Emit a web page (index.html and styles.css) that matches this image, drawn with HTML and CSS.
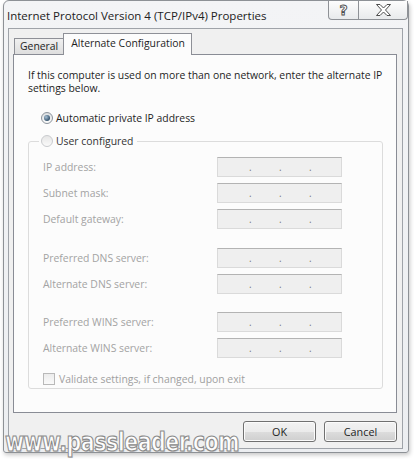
FILE: index.html
```html
<!DOCTYPE html>
<html>
<head>
<meta charset="utf-8">
<link rel="stylesheet" href="styles.css">
</head>
<body>
<div class="window">
  <div class="titlebar">
    <span class="title">Internet Protocol Version 4 (TCP/IPv4) Properties</span>
    <div class="caption">
      <div class="cbtn help"><span class="qmark">?</span></div>
      <div class="cbtn close">
        <svg width="17" height="12" viewBox="0 0 17 12"><polygon points="1.5,0.5 5,0.5 8.5,4 12,0.5 15.5,0.5 10.5,6 15.5,11.5 12,11.5 8.5,8 5,11.5 1.5,11.5 6.5,6" fill="#fff" stroke="#4d4d4d" stroke-width="1"/></svg>
      </div>
    </div>
  </div>
  <div class="client">
    <div class="tabs">
      <div class="tab">General</div>
      <div class="tab active">Alternate Configuration</div>
    </div>
    <div class="panel">
      <p class="intro">If this computer is used on more than one network, enter the alternate IP<br>settings below.</p>
      <div class="radio-row"><span class="rb checked"></span><span>Automatic private IP address</span></div>
      <fieldset class="group">
        <legend><span class="rb"></span><span>User configured</span></legend>
        <div class="field"><span class="lbl">IP address:</span><div class="ipbox"><span>.</span><span>.</span><span>.</span></div></div>
        <div class="field"><span class="lbl">Subnet mask:</span><div class="ipbox"><span>.</span><span>.</span><span>.</span></div></div>
        <div class="field"><span class="lbl">Default gateway:</span><div class="ipbox"><span>.</span><span>.</span><span>.</span></div></div>
        <div class="field sep1"><span class="lbl">Preferred DNS server:</span><div class="ipbox"><span>.</span><span>.</span><span>.</span></div></div>
        <div class="field"><span class="lbl">Alternate DNS server:</span><div class="ipbox"><span>.</span><span>.</span><span>.</span></div></div>
        <div class="field sep2"><span class="lbl">Preferred WINS server:</span><div class="ipbox"><span>.</span><span>.</span><span>.</span></div></div>
        <div class="field"><span class="lbl">Alternate WINS server:</span><div class="ipbox"><span>.</span><span>.</span><span>.</span></div></div>
        <div class="check-row"><span class="cb"></span><span>Validate settings, if changed, upon exit</span></div>
      </fieldset>
    </div>
    <div class="buttons">
      <button class="btn">OK</button>
      <button class="btn">Cancel</button>
    </div>
  </div>
</div>
<div class="watermark">www.passleader.com</div>
</body>
</html>
```

FILE: styles.css
```css
* { box-sizing: border-box; }
html, body { margin: 0; padding: 0; background: #fff; }
body {
  width: 414px; height: 460px; overflow: hidden; position: relative;
  font-family: "Open Sans", "Noto Sans", sans-serif;
  font-size: 10.4px; color: #1e1e1e;
}
.window {
  margin-left: 3px; width: 406px; height: 453px;
  border: 1px solid #8d9196; border-radius: 6px 6px 3px 3px;
  background: linear-gradient(#f3f4f6, #eceef1);
  padding: 0 5px 3px 4px;
  box-shadow: 1px 2px 4px rgba(0,0,0,.22);
  display: flex; flex-direction: column;
}
.titlebar { height: 27px; display: flex; align-items: flex-start; }
.title { flex: 1; margin-left: -1px; padding-top: 7px; line-height: 16px; font-size: 11.5px; color: #222; }
.caption { display: flex; margin-right: -5px; }
.cbtn {
  height: 19px; border: 1px solid #8e9196; border-top: none;
  background: linear-gradient(#fdfdfd, #e8eaec);
  display: flex; align-items: center; justify-content: center;
}
.cbtn.help { width: 31px; border-radius: 0 0 0 4px; }
.cbtn.close { width: 49px; border-left: none; border-radius: 0 0 4px 0; }
.qmark {
  font-family: "DejaVu Sans", sans-serif; font-weight: bold; font-size: 14px; line-height: 14px;
  color: #fff; -webkit-text-stroke: 0.9px #4d4d4d;
}
.client {
  flex: 1; background: #f0f0f0; border: 1px solid #9fa3a9;
  padding: 4px 5px 6px 4px; display: flex; flex-direction: column;
}
.tabs { display: flex; align-items: flex-end; height: 21px; padding-left: 1px; }
.tab {
  height: 16px; padding: 0 5px; border: 1px solid #8e9097; border-bottom: none;
  background: linear-gradient(#f0f0f0, #dedede); line-height: 15px; margin-right: -1px;
  color: #1e1e1e;
}
.tab.active {
  height: 22px; margin-bottom: -1px; padding: 1px 6px 0 7px; line-height: 16px;
  background: #fcfcfc; position: relative; z-index: 1;
}
.panel {
  height: 359px; border: 1px solid #898c95; background: #fcfcfc;
  padding: 14px 13px 0 14px;
}
.intro { margin: 0; line-height: 13px; }
.radio-row { display: flex; align-items: center; height: 16px; margin-top: 15px; padding-left: 13px; gap: 3px; }
.rb {
  width: 12px; height: 12px; border-radius: 50%; flex: none;
  border: 1px solid #c9cbce; background: linear-gradient(#e6e6e6, #fafafa);
  display: flex; align-items: center; justify-content: center;
}
.rb.checked { border-color: #8d949c; background: linear-gradient(#dcdfe2, #fbfbfb); }
.rb.checked::after {
  content: ""; width: 6px; height: 6px; border-radius: 50%;
  background: radial-gradient(circle at 35% 35%, #a9c2d6, #35536d 70%);
}
.group {
  margin: 7px 0 0 0; border: 1px solid #dcdcdc; border-radius: 3px;
  padding: 8px 12px 1px 14px; min-width: 0;
}
.group legend {
  display: flex; align-items: center; gap: 3px; height: 16px; line-height: 16px;
  margin-left: -4px; padding: 0 4px 0 2px; color: #333;
}
.field { display: flex; align-items: center; height: 20px; margin-top: 6px; color: #a3a3a3; }
.group legend + .field { margin-top: 0; }
.field.sep1 { margin-top: 19px; }
.field.sep2 { margin-top: 18px; }
.lbl { width: 174px; flex: none; }
.ipbox {
  width: 125px; height: 20px; background: #efefef;
  border: 1px solid #dadada; border-top-color: #b3b3b3;
  display: flex; align-items: center; padding-left: 31px; gap: 28px;
  color: #7a7a7a; font-size: 10px; line-height: 10px;
}
.ipbox span { width: 2px; text-align: center; }
.check-row { display: flex; align-items: center; height: 16px; margin-top: 13px; gap: 4px; color: #a0a0a0; }
.cb { width: 12px; height: 12px; border: 1px solid #b9b9b9; background: linear-gradient(#ececec, #fafafa); flex: none; }
.buttons { display: flex; justify-content: flex-end; gap: 8px; margin-top: 8px; }
.btn {
  width: 73px; height: 21px; margin: 0; padding: 0;
  font-family: inherit; font-size: 10.8px; color: #1e1e1e;
  border: 1px solid #707070; border-radius: 3px;
  background: linear-gradient(#f2f2f2 0%, #ebebeb 50%, #dddddd 51%, #cfcfcf 100%);
  box-shadow: inset 0 0 0 1px #fbfbfb;
}
.watermark {
  position: absolute; left: 5px; top: 433px;
  font-family: "DejaVu Sans", sans-serif; font-weight: bold; font-size: 22px; line-height: 22px;
  color: #fdfdfd; -webkit-text-stroke: 1px #8a8a8a; letter-spacing: -0.6px;
  text-shadow: 1px 1px 0 #d0d0d0;
  transform: scale(0.94, 1.2); transform-origin: 0 18.6px;
}
```
